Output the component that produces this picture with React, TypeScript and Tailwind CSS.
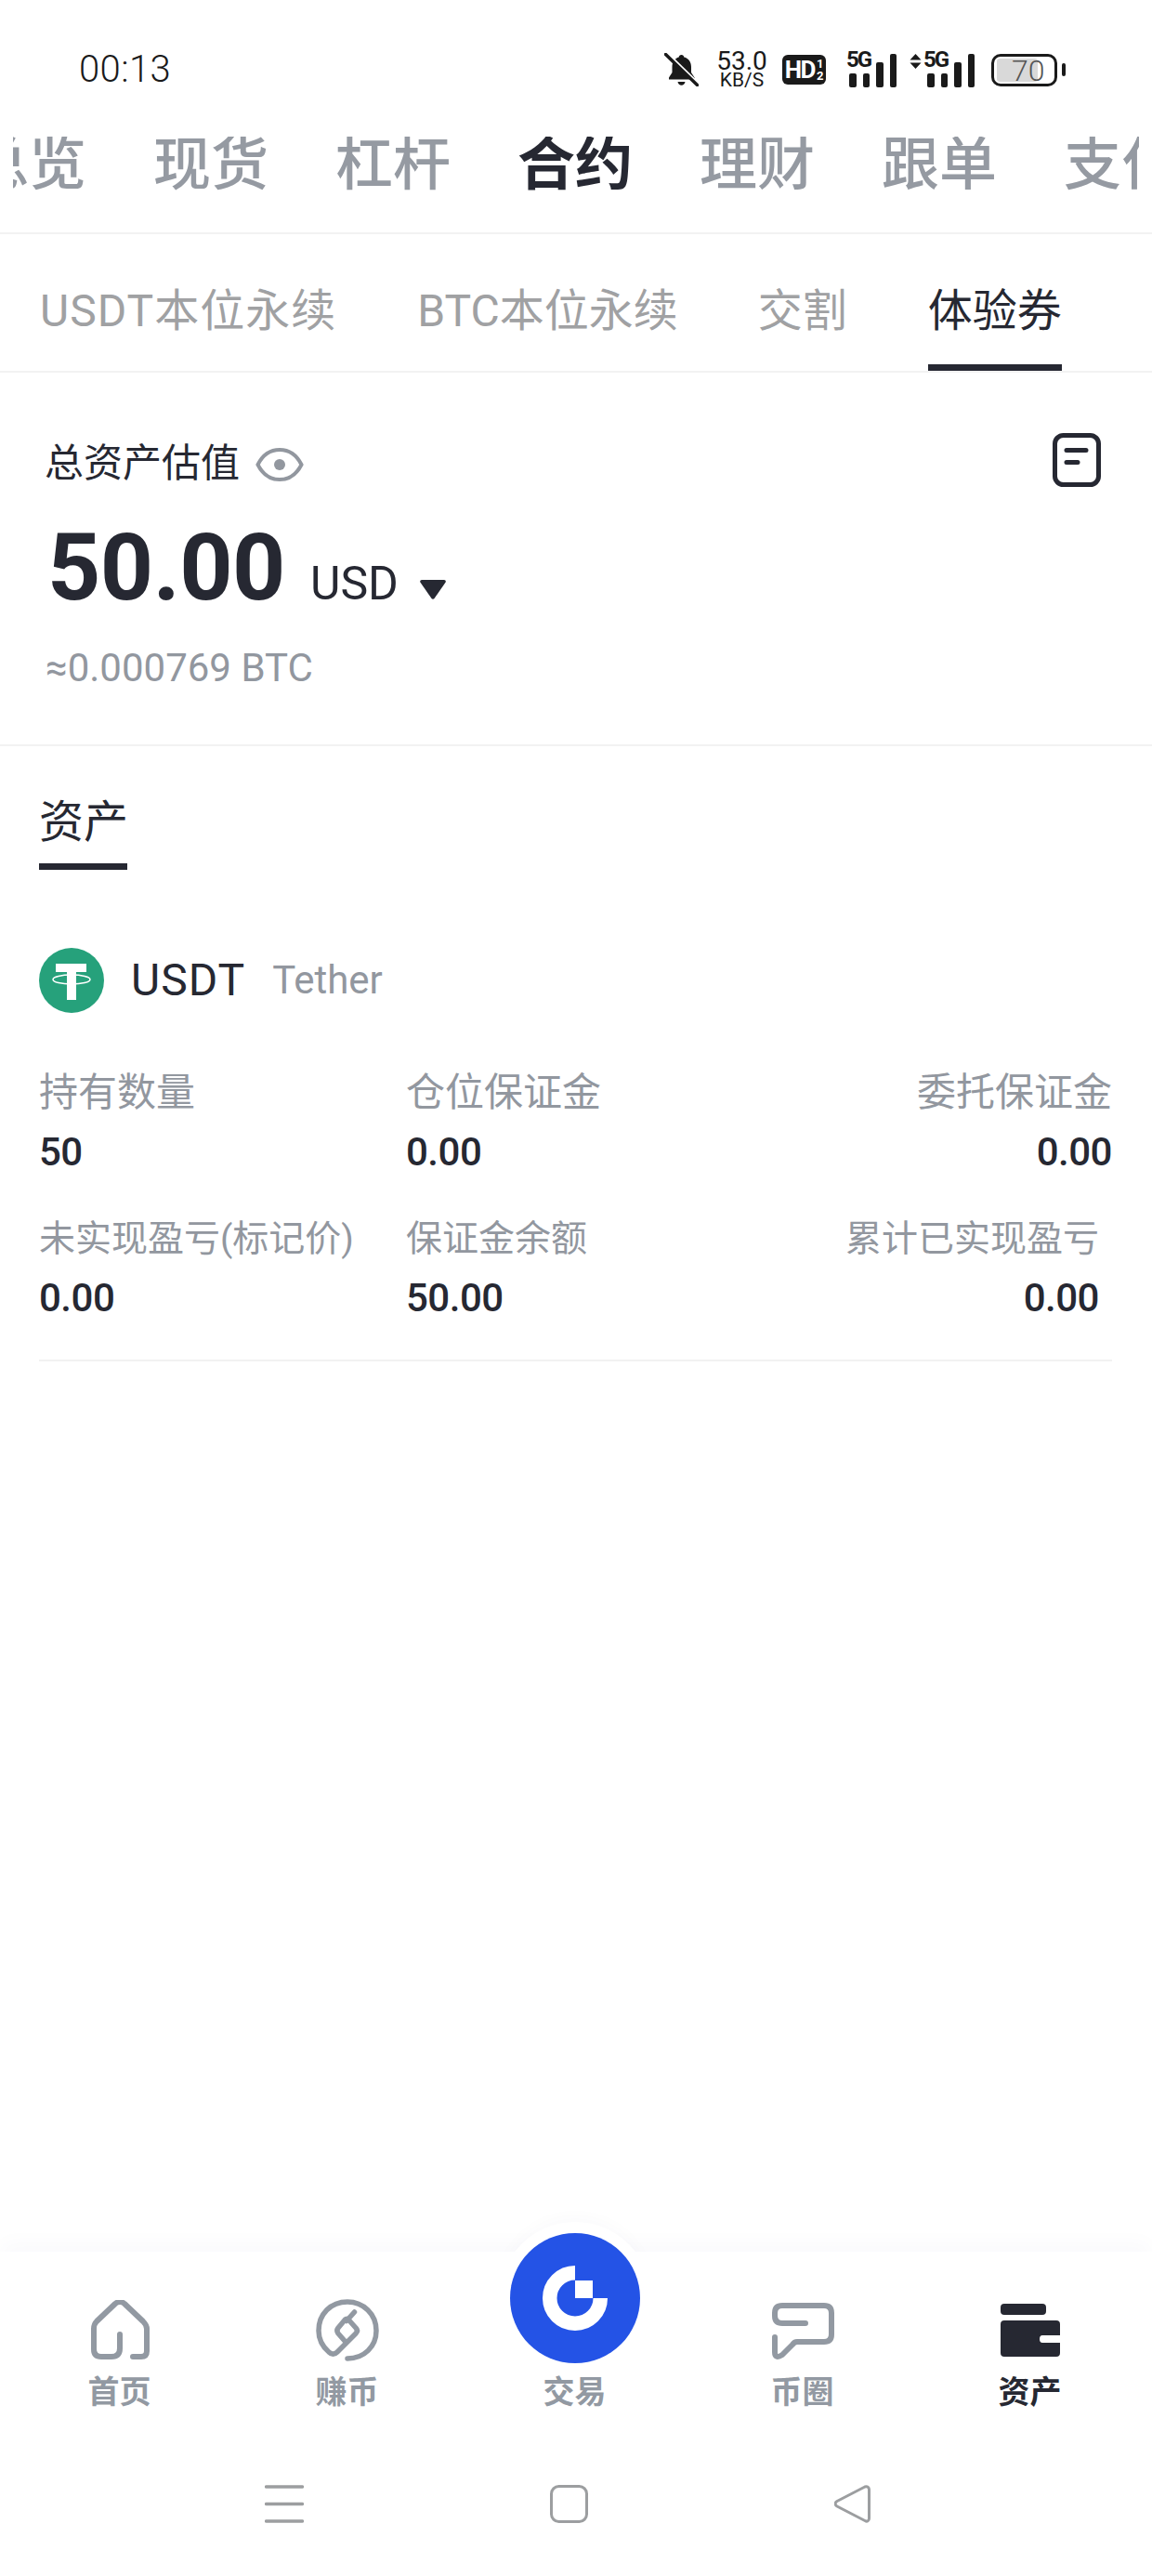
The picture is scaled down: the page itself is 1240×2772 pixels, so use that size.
import React from "react";

const mainTabs = ["总览", "现货", "杠杆", "合约", "理财", "跟单", "支付"];

function Signal({ arrows }: { arrows?: boolean }) {
  return (
    <div className={arrows ? "relative h-[37px] w-[69px] pl-[19px] flex items-end" : "relative h-[37px] w-[53px] pl-[3px] flex items-end"}>
      {arrows && (
        <svg className="absolute left-0 top-[1px]" width="13" height="16" viewBox="0 0 13 16">
          <path d="M6.5 0L12.5 6.5H0.5Z M0.5 9.5H12.5L6.5 16Z" fill="#1a1a1a" />
        </svg>
      )}
      <span className={arrows ? "absolute left-[15px] top-[-5px] text-[24px] leading-[24px] font-bold tracking-[-2px] text-[#1a1a1a]" : "absolute left-0 top-[-5px] text-[24px] leading-[24px] font-bold tracking-[-2px] text-[#1a1a1a]"}>5G</span>
      <div className="flex items-end gap-[7px]">
        <div className="h-[15px] w-[7.5px] rounded-[2px] bg-[#1a1a1a]" />
        <div className="h-[15px] w-[7.5px] rounded-[2px] bg-[#1a1a1a]" />
        <div className="h-[27px] w-[7.5px] rounded-[2px] bg-[#1a1a1a]" />
        <div className="h-[36px] w-[7.5px] rounded-[2px] bg-[#1a1a1a]" />
      </div>
    </div>
  );
}

function StatusBar() {
  return (
    <div className="flex h-[40px] items-center justify-between pl-[85px] pr-[93px] mt-[55px] text-black">
      <span className="text-[40px] leading-[40px] font-light tracking-[0.4px] text-[#1a1a1a]">00:13</span>
      <div className="flex items-center">
        <svg width="37" height="36" viewBox="0 0 37 36" fill="none">
          <path d="M18.5 2c1.6 0 2.6 1 2.8 2.6 5 1.2 7.7 5.2 7.700 10.400v6l3.600 5.500v2H5v-2l3.500-5.500v-6c0-5.200 3-9.200 7.200-10.400C15.900 3 16.900 2 18.500 2z" fill="#1a1a1a" />
          <path d="M14.500 31h8c-.4 2.300-2 3.700-4 3.700s-3.600-1.400-4-3.700z" fill="#1a1a1a" />
          <path d="M3.500 1.500L37.500 34.500" stroke="#ffffff" strokeWidth="4" />
          <path d="M1.500 1.500L35.500 34.500" stroke="#1a1a1a" strokeWidth="3.500" strokeLinecap="round" />
        </svg>
        <div className="ml-[19px] flex w-[55px] flex-col items-center text-[#1a1a1a]">
          <span className="text-[28px] leading-[23px]">53.0</span>
          <span className="text-[21px] leading-[19px]">KB/S</span>
        </div>
        <div className="ml-[16px] flex h-[32px] w-[47px] items-center justify-center rounded-[6px] bg-[#1a1a1a] text-white">
          <span className="text-[26px] leading-[26px] font-bold tracking-[-1.500px]">HD</span>
          <span className="ml-[2px] flex flex-col items-center text-[13px] leading-[13px] font-bold">
            <span>1</span>
            <span>2</span>
          </span>
        </div>
        <div className="ml-[22px]"><Signal /></div>
        <div className="ml-[15px]"><Signal arrows /></div>
        <div className="relative ml-[19px] h-[35px] w-[71px] rounded-[10px] border-[3px] border-[#1a1a1a]">
          <div className="absolute left-[3px] top-[2px] h-[25px] w-[44px] rounded-[3px] bg-[#d9d9d9]" />
          <span className="absolute left-[19px] top-[1px] text-[32px] leading-[28px] font-light text-[#555555]">70</span>
        </div>
        <div className="ml-[5px] h-[14px] w-[4px] rounded-[2px] bg-[#1a1a1a]" />
      </div>
    </div>
  );
}

function Stat({ label, value, small, right }: { label: string; value: string; small?: boolean; right?: boolean }) {
  return (
    <div className={right ? "flex flex-col items-end" : "flex flex-col items-start"}>
      <span className={small ? "text-[39px] leading-[38px] text-[#92979f]" : "text-[42px] leading-[42px] text-[#92979f]"}>{label}</span>
      <span className={small ? "mt-[24px] text-[42px] leading-[42px] font-medium tracking-[-0.5px] text-[#262832]" : "mt-[22px] text-[42px] leading-[42px] font-medium tracking-[-0.5px] text-[#262832]"}>{value}</span>
    </div>
  );
}

function NavItem({ label, active, children }: { label: string; active?: boolean; children?: React.ReactNode }) {
  return (
    <div className="flex flex-col items-center">
      <div className="flex h-[66px] w-[70px] items-center justify-center">{children}</div>
      <span className={active ? "mt-[16px] text-[34px] leading-[34px] font-bold text-[#262832]" : "mt-[16px] text-[34px] leading-[34px] font-bold text-[#9299a2]"}>{label}</span>
    </div>
  );
}

export default function App() {
  return (
    <div className="flex h-[2772px] w-[1240px] flex-col overflow-hidden bg-white font-['Roboto','Noto_Sans_CJK_SC',sans-serif]">
      <header>
        <StatusBar />
        <div className="mx-[14px] mt-[52px] overflow-hidden">
          <div className="-ml-[45px] flex w-max gap-[72px] pb-[41px]">
            {mainTabs.map((t) => (
              <span key={t} className={t === "合约" ? "text-[62px] leading-[62px] font-bold text-[#262832]" : "text-[62px] leading-[62px] font-medium text-[#959aa2]"}>{t}</span>
            ))}
          </div>
        </div>
      </header>

      <nav className="flex h-[151px] items-start border-y-2 border-[#f2f2f2] pl-[43px] pt-[59px]">
        <span className="text-[48px] leading-[48px] tracking-[1px] text-[#a0a1a3]">USDT本位永续</span>
        <span className="ml-[87px] text-[48px] leading-[48px] text-[#a0a1a3]">BTC本位永续</span>
        <span className="ml-[86px] text-[48px] leading-[48px] text-[#a0a1a3]">交割</span>
        <div className="ml-[87px] flex flex-col">
          <span className="text-[48px] leading-[48px] text-[#262832]">体验券</span>
          <div className="mt-[33px] h-[7px] w-full bg-[#262832]" />
        </div>
      </nav>

      <section className="h-[402px] border-b-2 border-[#f2f2f2] pl-[48px] pr-[55px] pt-[65px]">
        <div className="flex items-start justify-between">
          <div className="mt-[12px] flex items-center">
            <span className="text-[42px] leading-[42px] text-[#262832]">总资产估值</span>
            <svg className="ml-[17px] mt-[2px]" width="52" height="38" viewBox="0 0 52 38" fill="none">
              <path d="M2.500 19C8 8 16 3 26 3s18 5 23.500 16C44 30 36 35 26 35S8 30 2.500 19z" stroke="#92979f" strokeWidth="4" />
              <circle cx="26" cy="19" r="6" fill="#92979f" />
            </svg>
          </div>
          <svg width="52" height="58" viewBox="0 0 52 58" fill="none">
            <rect x="2.500" y="2.500" width="47" height="53" rx="9" stroke="#262832" strokeWidth="5" />
            <path d="M15 18.500H36M15 31.500H27" stroke="#262832" strokeWidth="5" strokeLinecap="round" />
          </svg>
        </div>
        <div className="ml-[3px] mt-[37px] flex items-baseline">
          <span className="text-[100px] leading-[100px] font-bold tracking-[-0.5px] text-[#262832]">50.00</span>
          <span className="ml-[27px] text-[50px] leading-[48px] text-[#262832]">USD</span>
          <svg className="mb-[5px] ml-[23px]" width="28" height="21" viewBox="0 0 28 21">
            <path d="M2 0H26C27.500 0 28.300 1.500 27.500 2.800L15.500 20C14.800 21 13.200 21 12.500 20L0.500 2.800C-0.300 1.500 0.500 0 2 0Z" fill="#262832" />
          </svg>
        </div>
        <div className="ml-[1px] mt-[37px] text-[42px] leading-[42px] text-[#92979f]">≈0.000769 BTC</div>
      </section>

      <main className="flex-1 pl-[42px] pr-[43px] pt-[58px]">
        <div className="inline-flex flex-col">
          <span className="text-[48px] leading-[48px] text-[#262832]">资产</span>
          <div className="mt-[20px] h-[7px] w-[95px] bg-[#262832]" />
        </div>

        <div className="mt-[84px] flex items-center">
          <svg width="70" height="70" viewBox="0 0 70 70" fill="none">
            <circle cx="35" cy="35" r="35" fill="#26a17b" />
            <path d="M18 17H51V26H40V56H30V26H18Z" fill="#fff" />
            <ellipse cx="35" cy="34" rx="20" ry="5" stroke="#fff" strokeWidth="1.500" />
          </svg>
          <span className="ml-[29px] text-[48px] leading-[48px] tracking-[1px] text-[#262832]">USDT</span>
          <span className="ml-[29px] text-[42px] leading-[42px] text-[#92979f]">Tether</span>
        </div>

        <div className="mt-[65px] grid grid-cols-[395px_1fr_auto]">
          <Stat label="持有数量" value="50" />
          <Stat label="仓位保证金" value="0.00" />
          <Stat label="委托保证金" value="0.00" right />
        </div>
        <div className="mt-[53px] grid grid-cols-[395px_1fr_auto] pr-[14px]">
          <Stat small label="未实现盈亏(标记价)" value="0.00" />
          <Stat small label="保证金余额" value="50.00" />
          <Stat small label="累计已实现盈亏" value="0.00" right />
        </div>
        <div className="mt-[45px] h-[2px] bg-[#f2f2f2]" />
      </main>

      <footer className="relative h-[349px] bg-white shadow-[0_-12px_20px_-2px_rgba(30,50,120,0.025)]">
        <div className="absolute left-[537px] top-[-32px] h-[164px] w-[164px] rounded-full bg-white shadow-[0_-6px_16px_rgba(30,50,120,0.02)]" />
        <div className="relative h-[349px] bg-white">
          <div className="grid grid-cols-[repeat(5,245px)] pl-[6px] pt-[52px]">
            <NavItem label="首页">
              <svg width="66" height="66" viewBox="96 2475 66 66" fill="none">
                <path d="M129 2512V2527Q129 2536 120 2536H109Q101 2536 101 2528V2506Q101 2501 104 2498L124 2479Q129 2475 134 2479L154 2498Q158 2502 158 2506V2530Q158 2536 152 2536H143" stroke="#9299a2" strokeWidth="6" strokeLinecap="round" strokeLinejoin="round" />
              </svg>
            </NavItem>
            <NavItem label="赚币">
              <svg width="70" height="70" viewBox="339 2473 70 70" fill="none">
                <path d="M374 2538C392 2538 405 2525 405 2508C405 2490 391 2477 374 2477C356 2477 343 2490 343 2508C343 2517 347 2525 354 2531C357 2534 360 2534 363 2531L383 2511C385 2509 385 2507 383 2505L375 2496C374 2495 372.500 2495 371.500 2496L364 2505C362.500 2507 362.500 2509 364 2511L371 2519M373 2497.500L381.500 2488" stroke="#9299a2" strokeWidth="5.500" strokeLinecap="round" strokeLinejoin="round" />
              </svg>
            </NavItem>
            <NavItem label="交易" />
            <NavItem label="币圈">
              <svg width="70" height="66" viewBox="829 2474 70 66" fill="none">
                <path d="M867 2499H842Q834 2499 834 2491V2488Q834 2480 842 2480H887Q895 2480 895 2488V2511Q895 2519 887 2519H858Q855 2519 853 2522L842 2533Q834 2538 834 2530V2514" stroke="#9299a2" strokeWidth="6" strokeLinecap="round" strokeLinejoin="round" />
              </svg>
            </NavItem>
            <NavItem label="资产" active>
              <svg width="64" height="58" viewBox="1078 2479 64 58" fill="#262832">
                <rect x="1078" y="2479" width="49" height="12" rx="4" />
                <path d="M1082 2497H1138Q1142 2497 1142 2501V2513H1123Q1120 2513 1120 2517T1123 2521H1142V2532Q1142 2536 1138 2536H1082Q1078 2536 1078 2532V2501Q1078 2497 1082 2497Z" />
              </svg>
            </NavItem>
          </div>
          <div className="mt-[83px] flex gap-[265px] pl-[285px]">
            <svg width="42" height="41" viewBox="0 0 42 41" fill="none">
              <path d="M1.500 2H40.500M1.500 20.500H40.500M1.500 39H40.500" stroke="#9c9ea0" strokeWidth="3.500" strokeLinecap="round" />
            </svg>
            <svg width="41" height="41" viewBox="0 0 41 41" fill="none">
              <rect x="1.500" y="1.500" width="38" height="38" rx="8" stroke="#9c9ea0" strokeWidth="3" />
            </svg>
            <svg width="39" height="41" viewBox="0 0 39 41" fill="none">
              <path d="M3 17.500L33 2C35.500 1 37.500 2.500 37.500 5V36C37.500 38.500 35.500 40 33 38.500L3 23C0.500 21.500 0.500 19 3 17.500Z" stroke="#9c9ea0" strokeWidth="3" strokeLinejoin="round" />
            </svg>
          </div>
        </div>
        <div className="absolute left-[549px] top-[-20px] flex h-[140px] w-[140px] items-center justify-center rounded-full bg-[#2453e6]">
          <svg width="140" height="140" viewBox="0 0 140 140" fill="none">
            <path d="M70 42.750A27.250 27.250 0 1 0 97.250 70" stroke="#ffffff" strokeWidth="15.500" />
            <rect x="70" y="51" width="19" height="19" fill="#ffffff" />
          </svg>
        </div>
      </footer>
    </div>
  );
}
